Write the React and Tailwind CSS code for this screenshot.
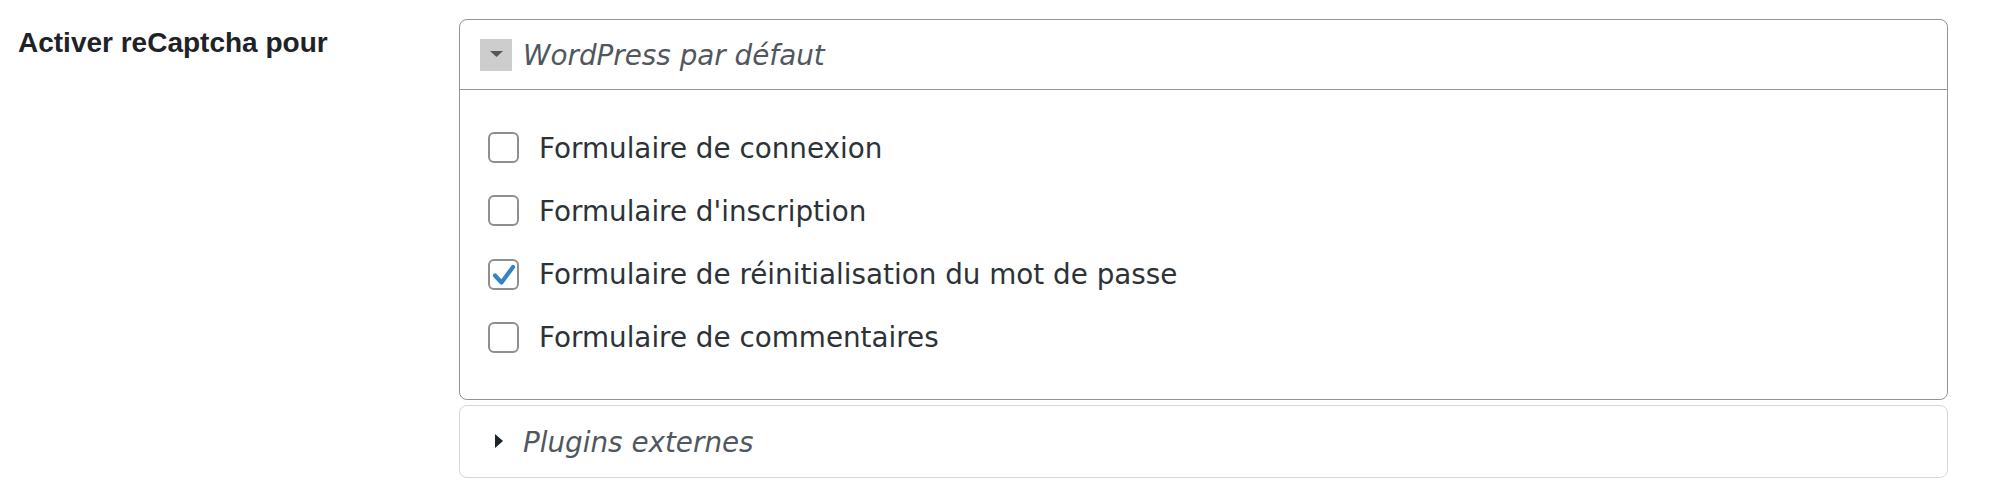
import React, { useState } from "react";

const body = { fontFamily: '"DejaVu Sans", Verdana, sans-serif' };

const options = [
  { id: "login", label: "Formulaire de connexion", checked: false },
  { id: "register", label: "Formulaire d'inscription", checked: false },
  { id: "reset", label: "Formulaire de réinitialisation du mot de passe", checked: true },
  { id: "comments", label: "Formulaire de commentaires", checked: false },
];

function Checkbox({ checked, onClick }) {
  return (
    <button
      onClick={onClick}
      className="w-[31px] h-[31px] shrink-0 rounded-[6px] border-2 border-[#8c8f94] bg-white flex items-center justify-center"
    >
      {checked && (
        <svg width="27" height="27" viewBox="0 0 27 27">
          <path d="M5 14.5 L11.5 21.5 L23 6" fill="none" stroke="#3582c4" strokeWidth="4.2" strokeLinecap="round" strokeLinejoin="round" />
        </svg>
      )}
    </button>
  );
}

export default function App() {
  const [items, setItems] = useState(options);
  const [open, setOpen] = useState(true);

  const toggle = (id) => {
    setItems(items.map((item) => (item.id === id ? { ...item, checked: !item.checked } : item)));
  };

  return (
    <div className="w-[1996px] h-[500px] bg-white flex pt-[19px] pl-[18px]">
      <div className="w-[441px] pt-[8px] shrink-0">
        <div className="text-[28px] leading-[32px] font-bold text-[#1d2327]" style={{ fontFamily: '"Liberation Sans", Arial, sans-serif' }}>
          Activer reCaptcha pour
        </div>
      </div>

      <div className="w-[1489px] flex flex-col gap-[5px]" style={body}>
        <div className="border border-[#949494] rounded-[8px] bg-white">
          <div className="h-[70px] flex items-center pl-[20px] gap-[11px] border-b border-[#949494]">
            <button onClick={() => setOpen(!open)} className="w-[32px] h-[32px] bg-[#cdcdcd] flex items-center justify-center">
              <svg width="13" height="6" viewBox="0 0 13 6" className="-mt-[2px]">
                <path d="M0 0 H13 L6.5 6 Z" fill="#50575e" />
              </svg>
            </button>
            <span className="text-[27.8px] leading-[32px] italic text-[#50575e] mt-[3px]">WordPress par défaut</span>
          </div>
          {open && (
            <div className="pt-[42px] pb-[46px] pl-[28px] flex flex-col gap-[32.3px]">
              {items.map((item) => (
                <div key={item.id} className="h-[31px] flex items-center gap-[20px]">
                  <Checkbox checked={item.checked} onClick={() => toggle(item.id)} />
                  <span className="text-[27.8px] leading-[31px] text-[#2c3338] mt-[1px]">{item.label}</span>
                </div>
              ))}
            </div>
          )}
        </div>

        <div className="border border-[#d6d6d6] rounded-[8px] bg-white h-[73px] flex items-center pl-[35px] gap-[20px]">
          <svg width="8" height="14" viewBox="0 0 8 14">
            <path d="M0 0 L8 7 L0 14 Z" fill="#1d2327" />
          </svg>
          <span className="text-[27.8px] leading-[32px] italic text-[#50575e] mt-[3px]">Plugins externes</span>
        </div>
      </div>
    </div>
  );
}
